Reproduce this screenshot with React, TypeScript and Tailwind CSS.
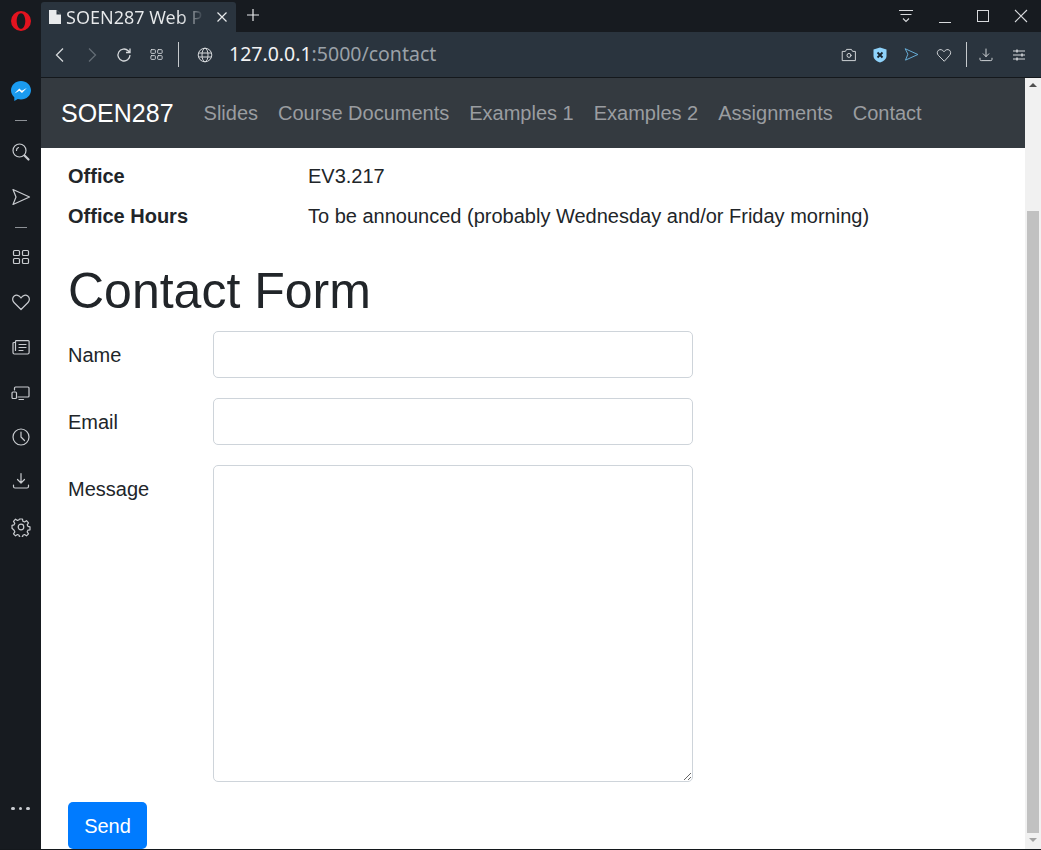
import type { ReactNode } from 'react';

const NAV_LINKS = ['Slides', 'Course Documents', 'Examples 1', 'Examples 2', 'Assignments', 'Contact'];

function Icon({ size = 20, className = '', children }: { size?: number; className?: string; children: ReactNode }) {
  return (
    <svg
      width={size}
      height={size}
      viewBox="0 0 20 20"
      fill="none"
      stroke="currentColor"
      strokeWidth={1.2}
      strokeLinecap="round"
      strokeLinejoin="round"
      className={className}
    >
      {children}
    </svg>
  );
}

const GridIcon = ({ size = 20 }: { size?: number }) => (
  <Icon size={size}>
    <rect x="2.5" y="3.5" width="6" height="5" rx="1" />
    <rect x="11.5" y="3.5" width="6" height="5" rx="1" />
    <rect x="2.5" y="11.5" width="6" height="5" rx="1" />
    <rect x="11.5" y="11.5" width="6" height="5" rx="1" />
  </Icon>
);

const SendIcon = ({ size = 20 }: { size?: number }) => (
  <Icon size={size}>
    <path d="M2 2.5 18.5 10 2 17.5 5 10Z" />
  </Icon>
);

const HeartIcon = ({ size = 20 }: { size?: number }) => (
  <Icon size={size}>
    <path d="M10 17.5 3 10.5C1 8.500 1.300 5.500 3.200 4 5.200 2.600 8 3 10 6c2-3 4.800-3.400 6.800-2 1.900 1.500 2.200 4.500.2 6.500Z" />
  </Icon>
);

const DownloadIcon = ({ size = 20 }: { size?: number }) => (
  <Icon size={size}>
    <path d="M10 2.500v9.500M6.500 8.500 10 12l3.500-3.500" />
    <path d="M2.500 14v1.500a1.500 1.500 0 0 0 1.500 1.500h12a1.500 1.500 0 0 0 1.500-1.500V14" />
  </Icon>
);

function SidebarDivider() {
  return <div className="h-px w-3 bg-[#8d9196]" />;
}

function Sidebar() {
  return (
    <aside className="w-[41px] shrink-0 bg-[#171b20] flex flex-col items-center text-[#c9ccd0] pb-[39px]">
      <svg width="22" height="22" viewBox="0 0 22 22" className="mt-[10px]">
        <path
          fillRule="evenodd"
          fill="#e3131f"
          d="M11 1a10 10 0 1 0 0 20 10 10 0 0 0 0-20Zm0 2.200c2.500 0 4.300 3.500 4.300 7.800s-1.800 7.800-4.300 7.800-4.300-3.500-4.300-7.800 1.800-7.800 4.300-7.800Z"
        />
      </svg>
      <svg width="20" height="20" viewBox="0 0 20 20" className="mt-[49px]">
        <path d="M10 0C4.500 0 0 4.100 0 9.300c0 2.800 1.300 5.200 3.300 6.900V20l3.500-1.900c1 .3 2.100.4 3.200.4 5.500 0 10-4.100 10-9.200S15.500 0 10 0Z" fill="#1a9bf0" />
        <path d="m3.500 12.500 4.800-5 2.500 2.300 5-2.800-4.800 5-2.600-2.300Z" fill="#fff" />
      </svg>
      <div className="mt-[19px]"><SidebarDivider /></div>
      <div className="mt-[21px]">
        <Icon size={20}>
          <circle cx="8.500" cy="8.500" r="6.500" />
          <path d="M5.500 8.500a3 3 0 0 1 2-3" />
          <path d="m13.500 13.500 4 4" strokeWidth={2.200} />
        </Icon>
      </div>
      <div className="mt-[25px]"><SendIcon /></div>
      <div className="mt-[20px]"><SidebarDivider /></div>
      <div className="mt-[19px]"><GridIcon size={20} /></div>
      <div className="mt-[25px]"><HeartIcon /></div>
      <div className="mt-[25px]">
        <Icon>
          <path d="M4.500 5.500V4.500a.8.8 0 0 1 .8-.8h12a.8.8 0 0 1 .8.800v11a1.500 1.500 0 0 1-1.500 1.500H3.500A1.500 1.500 0 0 1 2 15.500V6.500a1 1 0 0 1 1-1h1.500v8" />
          <path d="M8 7.500h7M8 10.500h7M8 13.500h4" />
        </Icon>
      </div>
      <div className="mt-[25px]">
        <Icon>
          <path d="M3.500 8V6a1 1 0 0 1 1-1h12.500a1 1 0 0 1 1 1v8a1 1 0 0 1-1 1H7" />
          <rect x="1" y="10" width="4.500" height="6.500" rx="1" />
          <path d="M8 17.500h4.500" />
        </Icon>
      </div>
      <div className="mt-[25px]">
        <Icon>
          <circle cx="10" cy="10" r="8" />
          <path d="M10 5v5l3.500 3.500" />
        </Icon>
      </div>
      <div className="mt-[24px]"><DownloadIcon /></div>
      <div className="mt-[26px]">
        <Icon>
          <circle cx="10" cy="10" r="2.800" />
          <path d="M8.500 2h3l.4 2.300 1.600.7 2-1.300 2 2.100-1.300 2 .7 1.500 2.100.5v3l-2.100.4-.7 1.600 1.300 2-2 2-2-1.300-1.600.7-.4 2.100h-3l-.4-2.100-1.600-.7-2 1.300-2-2 1.300-2-.7-1.600L1 11.300v-3l2.100-.5.700-1.500-1.300-2 2-2.100 2 1.300 1.600-.7Z" />
        </Icon>
      </div>
      <div className="mt-auto flex gap-[4px]">
        <span className="w-[3.500px] h-[3.500px] rounded-full bg-[#c9ccd0]" />
        <span className="w-[3.500px] h-[3.500px] rounded-full bg-[#c9ccd0]" />
        <span className="w-[3.500px] h-[3.500px] rounded-full bg-[#c9ccd0]" />
      </div>
    </aside>
  );
}

function TabStrip() {
  return (
    <div className="h-[32px] shrink-0 bg-[#171b20] flex items-end text-[#e8eaec]">
      <div className="w-[195px] h-[30px] bg-[#2a343e] rounded-t-[3px] flex items-center pl-[8px] pr-[8px] font-['Noto_Sans',sans-serif] text-[18px]">
        <svg width="12" height="14" viewBox="0 0 12 14" className="shrink-0">
          <path d="M0 0h7.500L12 4.500V14H0Z" fill="#e8eaec" />
          <path d="M7.500 0v4.500H12" fill="#2a343e" />
        </svg>
        <span className="ml-[5px] whitespace-nowrap bg-[linear-gradient(to_right,#e8eaec_85%,#39434d)] bg-clip-text text-transparent">
          SOEN287 Web P
        </span>
        <svg width="12" height="12" viewBox="0 0 12 12" className="ml-auto" stroke="currentColor" strokeWidth="1.200">
          <path d="M1.500 1.500l9 9M10.500 1.500l-9 9" />
        </svg>
      </div>
      <svg width="12" height="12" viewBox="0 0 12 12" className="ml-[11px] mb-[11px]" stroke="currentColor" strokeWidth="1.200">
        <path d="M6 0v12M0 6h12" />
      </svg>
      <div className="ml-auto flex items-center h-full pr-[13px] text-[#d8dadd]">
        <svg width="16" height="14" viewBox="0 0 16 14" fill="none" stroke="currentColor" strokeWidth="1.100">
          <path d="M1 1.500h14M2.500 5.500h11M5 9.500l3 3 3-3" />
        </svg>
        <div className="w-[12px] h-px bg-current ml-[25px] mt-[13px]" />
        <div className="w-[12px] h-[12px] border border-current ml-[26px]" />
        <svg width="14" height="14" viewBox="0 0 14 14" className="ml-[25px]" stroke="currentColor" strokeWidth="1.100">
          <path d="M1 1l12 12M13 1 1 13" />
        </svg>
      </div>
    </div>
  );
}

function Toolbar() {
  return (
    <div className="h-[46px] shrink-0 bg-[#2a343e] border-b-[1px] border-[#14181c] flex items-center pl-[12px] pr-[15px] text-[#d5d8db]">
      <svg width="14" height="16" viewBox="0 0 14 16" fill="none" stroke="currentColor" strokeWidth="1.300">
        <path d="M10 1.500 3.500 8 10 14.500" />
      </svg>
      <svg width="14" height="16" viewBox="0 0 14 16" fill="none" stroke="#636c75" strokeWidth="1.300" className="ml-[18px]">
        <path d="M4 1.500 10.500 8 4 14.500" />
      </svg>
      <svg width="16" height="16" viewBox="0 0 16 16" fill="none" stroke="currentColor" strokeWidth="1.300" className="ml-[17px]">
        <path d="M14 8a6 6 0 1 1-1.800-4.300L14 5.500M14 1.500v4h-4" />
      </svg>
      <div className="ml-[17px]"><GridIcon size={15} /></div>
      <div className="w-px h-[25px] bg-[#c6cacd] ml-[14px]" />
      <svg width="16" height="16" viewBox="0 0 16 16" fill="none" stroke="currentColor" strokeWidth="1" className="ml-[18px]">
        <circle cx="8" cy="8" r="6.800" />
        <ellipse cx="8" cy="8" rx="3" ry="6.800" />
        <path d="M1.500 6h13M1.500 10h13" />
      </svg>
      <span className="ml-[16px] mb-[2px] font-['Noto_Sans',sans-serif] text-[19.500px] text-[#f1f2f3]">
        127.0.0.1<span className="text-[#9aa1a8]">:5000/contact</span>
      </span>
      <div className="ml-auto flex items-center">
        <Icon size={16}>
          <path d="M2 5.500h3.500L7 3h6l1.500 2.500H18v11.500H2Z" />
          <circle cx="10" cy="10.500" r="2.500" />
        </Icon>
        <svg width="14" height="16" viewBox="0 0 14 16" className="ml-[16px]">
          <path d="M7 .5 13.500 2.500V9c0 3-3 5.500-6.500 6.500C3.500 14.500.5 12 .5 9V2.500Z" fill="#8fd3fb" />
          <path d="m4.500 5.500 5 5M9.500 5.500l-5 5" stroke="#17242f" strokeWidth="1.800" />
        </svg>
        <div className="ml-[17px] text-[#6cb8e4]"><SendIcon size={15} /></div>
        <div className="ml-[17px]"><HeartIcon size={16} /></div>
        <div className="w-px h-[25px] bg-[#c6cacd] ml-[14px]" />
        <div className="ml-[11px]"><DownloadIcon size={16} /></div>
        <svg width="14" height="14" viewBox="0 0 14 14" fill="none" stroke="currentColor" strokeWidth="1" className="ml-[18px]">
          <path d="M1 3h12M1 7h12M1 11h12" />
          <path d="M5 1.500v3M10 5.500v3M5 9.500v3" strokeWidth="1.500" />
        </svg>
      </div>
    </div>
  );
}

function Scrollbar() {
  return (
    <div className="w-[16px] shrink-0 bg-[#f1f1f1] flex flex-col items-center">
      <div className="mt-[5px] w-0 h-0 border-x-[4px] border-x-transparent border-b-[4px] border-b-[#505050]" />
      <div className="mt-[124px] w-[12px] h-[622px] bg-[#c1c1c1]" />
      <div className="mt-[5px] w-0 h-0 border-x-[4px] border-x-transparent border-t-[4px] border-t-[#a3a3a3]" />
    </div>
  );
}

function Field({ label, children }: { label: string; children: ReactNode }) {
  return (
    <div className="flex">
      <label className="w-[145px] shrink-0 pt-[9px] leading-[30px]">{label}</label>
      {children}
    </div>
  );
}

function Page() {
  return (
    <main className="flex-1 min-w-0 bg-white text-[#212529] text-[20px] font-['Liberation_Sans',sans-serif]">
      <nav className="h-[70px] bg-[#343a40] flex items-center pl-[20px]">
        <span className="text-[25px] text-white mr-[30px] pt-px">SOEN287</span>
        <div className="flex gap-[20px] text-[#9a9da0]">
          {NAV_LINKS.map((link) => (
            <span key={link}>{link}</span>
          ))}
        </div>
      </nav>
      <div className="pl-[27px]">
        <div className="flex h-[40px] pt-[17px] leading-[30px] -mt-px items-center">
          <strong className="w-[240px] font-bold">Office</strong>
          <span>EV3.217</span>
        </div>
        <div className="flex h-[40px] pt-[13px] leading-[30px] items-center mt-[2px]">
          <strong className="w-[240px] font-bold">Office Hours</strong>
          <span>To be announced (probably Wednesday and/or Friday morning)</span>
        </div>
        <h1 className="text-[50px] leading-[60px] mt-[32px] mb-[10px]">Contact Form</h1>
        <div className="flex flex-col gap-[20px]">
          <Field label="Name">
            <input className="w-[480px] h-[47px] border border-[#ced4da] rounded-[5px]" />
          </Field>
          <Field label="Email">
            <input className="w-[480px] h-[47px] border border-[#ced4da] rounded-[5px]" />
          </Field>
          <Field label="Message">
            <textarea className="w-[480px] h-[317px] border border-[#ced4da] rounded-[5px] block" />
          </Field>
          <button className="w-[79px] h-[47px] bg-[#007bff] text-white rounded-[5px]">Send</button>
        </div>
      </div>
    </main>
  );
}

export default function App() {
  return (
    <div className="w-[1041px] h-[850px] overflow-hidden flex bg-[#171b20] border-b border-[#14181c]">
      <Sidebar />
      <div className="flex-1 min-w-0 flex flex-col">
        <TabStrip />
        <Toolbar />
        <div className="flex-1 min-h-0 flex overflow-hidden">
          <Page />
          <Scrollbar />
        </div>
      </div>
    </div>
  );
}
